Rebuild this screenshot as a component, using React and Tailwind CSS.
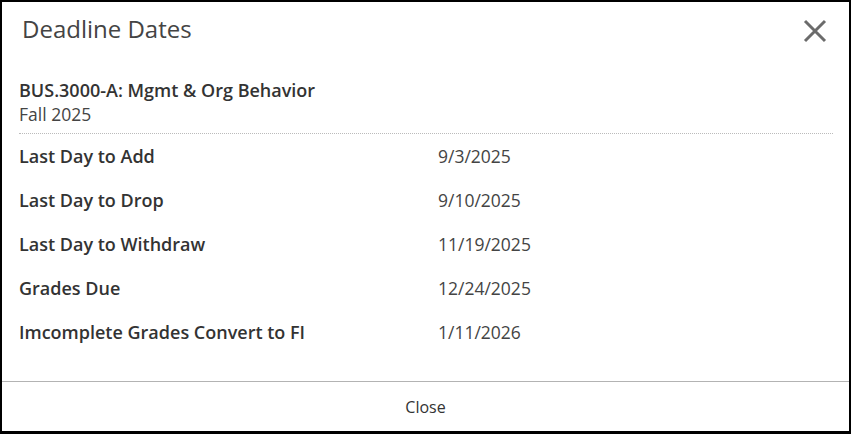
import React from "react";

const rows = [
  ["Last Day to Add", "9/3/2025"],
  ["Last Day to Drop", "9/10/2025"],
  ["Last Day to Withdraw", "11/19/2025"],
  ["Grades Due", "12/24/2025"],
  ["Imcomplete Grades Convert to FI", "1/11/2026"],
];

export default function App() {
  return (
    <div
      className="w-[851px] h-[434px] bg-white border-black border-t-2 border-l-2 border-r-2 border-b-[3px] flex flex-col text-[#333]"
      style={{ fontFamily: '"Open Sans", sans-serif' }}
    >
      <div className="flex items-start justify-between pl-[20px] pr-[20px] pt-[11px] h-[76px]">
        <h1 className="text-[24px] leading-[32px] font-normal text-[#444]">Deadline Dates</h1>
        <button className="mt-[5px] mr-[1px]">
          <svg width="26" height="26" viewBox="0 0 26 26">
            <path d="M3 3 L23 23 M23 3 L3 23" stroke="#6b6b6b" strokeWidth="3" strokeLinecap="butt" />
          </svg>
        </button>
      </div>
      <div className="pl-[17px] pr-[16px] flex-1">
        <div className="pb-[7px] border-b border-dotted border-[#bbb]">
          <div className="text-[18px] leading-[24px] font-semibold text-[#333]">BUS.3000-A: Mgmt &amp; Org Behavior</div>
          <div className="text-[17.5px] leading-[24px] text-[#444]">Fall 2025</div>
        </div>
        <div>
          {rows.map(([l, d]) => (
            <div key={l} className="flex h-[44px] items-center">
              <div className="w-[419px] text-[18px] font-semibold text-[#333]">{l}</div>
              <div className="text-[17.5px] text-[#444]">{d}</div>
            </div>
          ))}
        </div>
      </div>
      <div className="border-t border-[#b3b3b3] h-[50px] flex items-center justify-center">
        <span className="text-[16px] text-[#333]">Close</span>
      </div>
    </div>
  );
}
